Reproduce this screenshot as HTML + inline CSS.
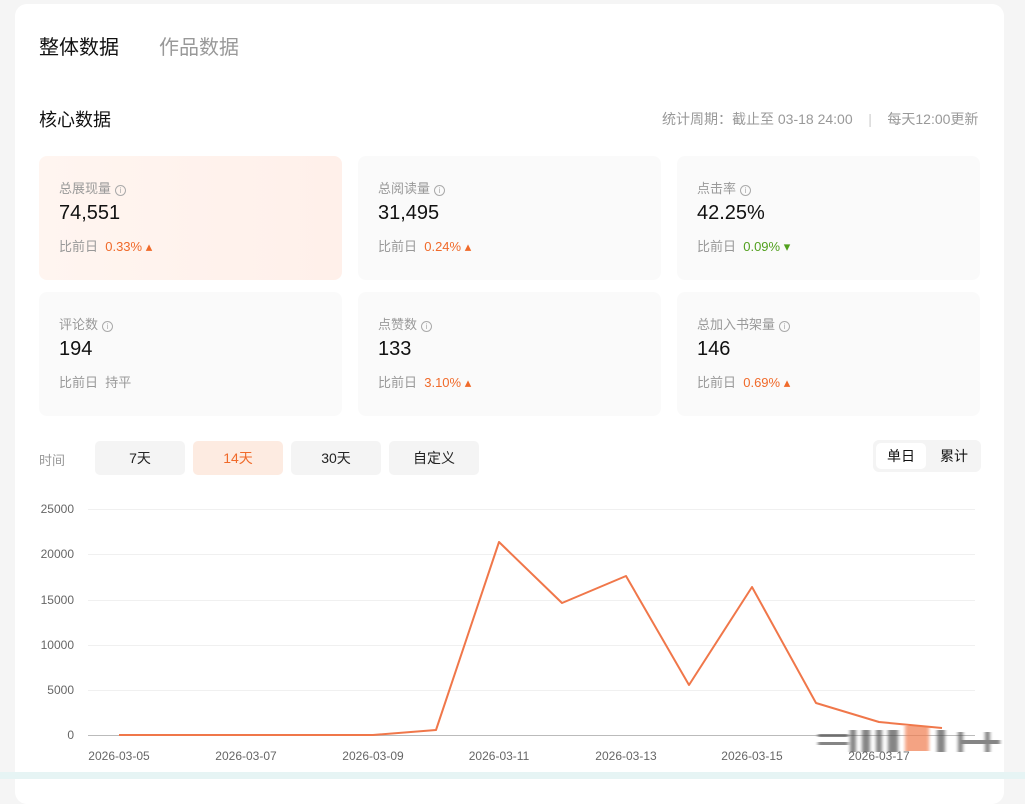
<!DOCTYPE html>
<html><head><meta charset="utf-8"><style>
*{margin:0;padding:0;box-sizing:border-box}
body{width:1025px;height:779px;background:#f5f5f5;font-family:"Liberation Sans","Noto Sans CJK SC",sans-serif;position:relative;overflow:hidden}
.card{position:absolute;left:15px;top:4px;width:989px;height:800px;background:#fff;border-radius:12px}
.abs{position:absolute;white-space:nowrap}
.m{position:absolute;width:303px;height:124px;border-radius:8px;background:#fafafa}
.m .t{position:absolute;left:20px;top:22px;font-size:13px;color:#999}
.m .v{position:absolute;left:20px;top:46px;font-size:20px;color:#111}
.m .c{position:absolute;left:20px;top:80px;font-size:13px;color:#999}
.up{color:#f06a2a}.dn{color:#52a01e}
.i{display:inline-block;width:11px;height:11px;border:1px solid #aaa;border-radius:50%;font-size:8px;line-height:9px;text-align:center;color:#aaa;margin-left:4px;vertical-align:0}
.b{position:absolute;top:441px;height:34px;width:90px;border-radius:5px;background:#f4f4f4;font-size:14px;color:#222;text-align:center;line-height:34px}
</style></head><body>
<div class="card"></div>
<div class="abs" style="left:39px;top:31px;font-size:20px;color:#111">整体数据</div>
<div class="abs" style="left:159px;top:31px;font-size:20px;color:#999">作品数据</div>
<div class="abs" style="left:39px;top:106px;font-size:18px;color:#111">核心数据</div>
<div class="abs" style="left:662px;top:109px;font-size:14px;color:#999">统计周期：截止至 03-18 24:00 &nbsp;&nbsp;&nbsp;<span style="color:#ccc">|</span>&nbsp;&nbsp;&nbsp; 每天12:00更新</div>

<div class="m" style="left:39px;top:156px;background:linear-gradient(90deg,#fff5f0,#fff0ea)"><div class="t">总展现量<span class="i">i</span></div><div class="v">74,551</div><div class="c">比前日 <span class="up">&nbsp;0.33% ▴</span></div></div>
<div class="m" style="left:358px;top:156px"><div class="t">总阅读量<span class="i">i</span></div><div class="v">31,495</div><div class="c">比前日 <span class="up">&nbsp;0.24% ▴</span></div></div>
<div class="m" style="left:677px;top:156px"><div class="t">点击率<span class="i">i</span></div><div class="v">42.25%</div><div class="c">比前日 <span class="dn">&nbsp;0.09% ▾</span></div></div>
<div class="m" style="left:39px;top:292px"><div class="t">评论数<span class="i">i</span></div><div class="v">194</div><div class="c">比前日 &nbsp;持平</div></div>
<div class="m" style="left:358px;top:292px"><div class="t">点赞数<span class="i">i</span></div><div class="v">133</div><div class="c">比前日 <span class="up">&nbsp;3.10% ▴</span></div></div>
<div class="m" style="left:677px;top:292px"><div class="t">总加入书架量<span class="i">i</span></div><div class="v">146</div><div class="c">比前日 <span class="up">&nbsp;0.69% ▴</span></div></div>

<div class="abs" style="left:39px;top:450px;font-size:13px;color:#999">时间</div>
<div class="b" style="left:95px">7天</div>
<div class="b" style="left:193px;background:#fdebe1;color:#f06a2a">14天</div>
<div class="b" style="left:291px">30天</div>
<div class="b" style="left:389px">自定义</div>
<div class="abs" style="left:873px;top:440px;width:108px;height:32px;background:#f4f4f4;border-radius:6px"></div>
<div class="abs" style="left:876px;top:443px;width:50px;height:26px;background:#fff;border-radius:5px;font-size:14px;line-height:26px;text-align:center;color:#111">单日</div>
<div class="abs" style="left:930px;top:443px;width:48px;height:26px;font-size:14px;line-height:26px;text-align:center;color:#111">累计</div>

<svg class="abs" style="left:0;top:0" width="1025" height="779">
<defs><filter id="bl"><feGaussianBlur stdDeviation="1.5 0.3"/></filter></defs>
<g stroke="#f0f0f0" stroke-width="1">
<line x1="88" x2="975" y1="509.5" y2="509.5"/><line x1="88" x2="975" y1="554.5" y2="554.5"/><line x1="88" x2="975" y1="600.5" y2="600.5"/><line x1="88" x2="975" y1="645.5" y2="645.5"/><line x1="88" x2="975" y1="690.5" y2="690.5"/></g>
<line x1="88" x2="975" y1="735.5" y2="735.5" stroke="#bbb"/>
<g font-size="12" fill="#666" text-anchor="end" font-family="Liberation Sans">
<text x="74" y="513">25000</text><text x="74" y="558">20000</text><text x="74" y="604">15000</text><text x="74" y="649">10000</text><text x="74" y="694">5000</text><text x="74" y="739">0</text></g>
<g font-size="12" fill="#666" text-anchor="middle" font-family="Liberation Sans">
<text x="119" y="760">2026-03-05</text><text x="246" y="760">2026-03-07</text><text x="373" y="760">2026-03-09</text><text x="499" y="760">2026-03-11</text><text x="626" y="760">2026-03-13</text><text x="752" y="760">2026-03-15</text><text x="879" y="760">2026-03-17</text></g>
<polyline fill="none" stroke="#f0774a" stroke-width="2" stroke-linejoin="round" points="119,735 182,735 246,735 309,735 373,735 436,730 499,542 562,603 626,576 689,685 752,587 816,703 879,722 942,728"/>
<g fill="#444" opacity="0.65" filter="url(#bl)">
<rect x="818" y="734" width="30" height="3"/><rect x="818" y="742" width="30" height="3"/><rect x="850" y="730" width="6" height="22"/><rect x="862" y="730" width="8" height="22"/><rect x="876" y="730" width="6" height="22"/><rect x="888" y="730" width="10" height="22"/><rect x="937" y="730" width="8" height="22"/><rect x="958" y="732" width="5" height="20"/><rect x="985" y="732" width="5" height="20"/><rect x="960" y="740" width="40" height="4"/></g>
<rect x="905" y="726" width="24" height="25" fill="#f07d50" opacity="0.7" filter="url(#bl)"/>
<rect x="0" y="772" width="1025" height="7" fill="#e6f4f4"/>
</svg>
</body></html>
